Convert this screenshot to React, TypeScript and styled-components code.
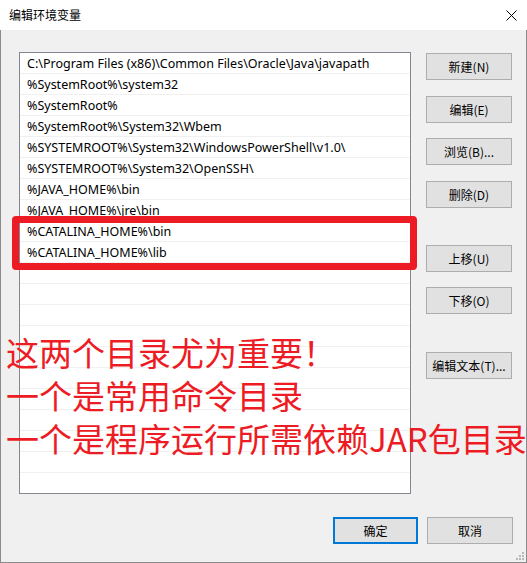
import React from "react";
import styled, { createGlobalStyle } from "styled-components";

const GlobalStyle = createGlobalStyle`
  html, body { margin: 0; padding: 0; background: #ffffff; }
  * { box-sizing: border-box; }
`;

const Window = styled.div`
  position: relative;
  width: 527px;
  height: 563px;
  display: flex;
  flex-direction: column;
  background: #f0f0f0;
  font-family: "Noto Sans", "Noto Sans CJK SC", sans-serif;
  font-size: 12px;
  color: #000;
  overflow: hidden;
`;

const TitleBar = styled.div`
  height: 30px;
  flex: none;
  display: flex;
  align-items: center;
  justify-content: space-between;
  background: #ffffff;
  padding: 0 10px 0 9px;
`;

const Title = styled.span`
  font-family: "Noto Sans CJK SC", sans-serif;
  font-size: 12px;
  line-height: 1;
`;

const CloseIcon = styled.svg`
  width: 11px;
  height: 11px;
  display: block;
`;

const Body = styled.div`
  flex: 1;
  display: flex;
  flex-direction: column;
  border-left: 1px solid #8a8a8a;
  border-right: 1px solid #8a8a8a;
  border-bottom: 1px solid #8a8a8a;
`;

const Main = styled.div`
  display: flex;
  padding: 22px 0 0 18px;
`;

const ListBox = styled.div`
  width: 392px;
  height: 442px;
  border: 1px solid #828790;
  background: #ffffff;
  overflow: hidden;
  flex: none;
`;

const Row = styled.div`
  height: 21px;
  border-bottom: 1px solid #f0f0f0;
  padding: 1px 0 0 7px;
  display: flex;
  align-items: center;
  font-family: "Noto Sans", "Noto Sans CJK SC", sans-serif;
  font-size: 12.5px;
  white-space: nowrap;
`;

const SideColumn = styled.div`
  display: flex;
  flex-direction: column;
  margin-left: 15px;
  padding-top: 1px;
`;

const Button = styled.button<{ $top?: number; $default?: boolean; $width?: number }>`
  width: ${(p) => p.$width ?? 86}px;
  height: 27px;
  margin-top: ${(p) => p.$top ?? 0}px;
  background: #e1e1e1;
  border: ${(p) => (p.$default ? "2px solid #0078d7" : "1px solid #adadad")};
  border-radius: 0;
  padding: 0;
  font-family: "Noto Sans CJK SC", sans-serif;
  font-size: 12px;
  color: #000;
  display: flex;
  align-items: center;
  justify-content: center;
  line-height: 1;
`;

const Footer = styled.div`
  display: flex;
  justify-content: flex-end;
  gap: 9px;
  padding: 23px 13px 0 0;
`;

const Highlight = styled.div`
  position: absolute;
  left: 12px;
  top: 216px;
  width: 405px;
  height: 54px;
  border: 7px solid #ed1c24;
  border-radius: 4px;
  pointer-events: none;
`;

const Note = styled.div`
  position: absolute;
  left: 6px;
  top: 331px;
  color: #ed1c24;
  font-family: "Noto Sans CJK SC", sans-serif;
  font-size: 33px;
  white-space: nowrap;
  pointer-events: none;
`;

const NoteLine = styled.div`
  height: 43px;
  line-height: 43px;
`;

const Grip = styled.svg`
  position: absolute;
  right: 3px;
  bottom: 3px;
  width: 8px;
  height: 8px;
`;

const paths = [
  "C:\\Program Files (x86)\\Common Files\\Oracle\\Java\\javapath",
  "%SystemRoot%\\system32",
  "%SystemRoot%",
  "%SystemRoot%\\System32\\Wbem",
  "%SYSTEMROOT%\\System32\\WindowsPowerShell\\v1.0\\",
  "%SYSTEMROOT%\\System32\\OpenSSH\\",
  "%JAVA_HOME%\\bin",
  "%JAVA_HOME%\\jre\\bin",
  "%CATALINA_HOME%\\bin",
  "%CATALINA_HOME%\\lib",
];

const rows = [...paths, ...Array(12).fill("")];

export default function App() {
  return (
    <>
      <GlobalStyle />
      <Window>
        <TitleBar>
          <Title>编辑环境变量</Title>
          <CloseIcon viewBox="0 0 11 11">
            <path d="M0.5 0.5 L10.5 10.5 M10.5 0.5 L0.5 10.5" stroke="#000" strokeWidth="1" fill="none" />
          </CloseIcon>
        </TitleBar>
        <Body>
          <Main>
            <ListBox>
              {rows.map((r, i) => (
                <Row key={i}>{r}</Row>
              ))}
            </ListBox>
            <SideColumn>
              <Button>新建(N)</Button>
              <Button $top={16}>编辑(E)</Button>
              <Button $top={15}>浏览(B)...</Button>
              <Button $top={16}>删除(D)</Button>
              <Button $top={37}>上移(U)</Button>
              <Button $top={15}>下移(O)</Button>
              <Button $top={38}>编辑文本(T)...</Button>
            </SideColumn>
          </Main>
          <Footer>
            <Button $default $width={85}>确定</Button>
            <Button>取消</Button>
          </Footer>
        </Body>
        <Highlight />
        <Note>
          <NoteLine>这两个目录尤为重要！</NoteLine>
          <NoteLine>一个是常用命令目录</NoteLine>
          <NoteLine>一个是程序运行所需依赖JAR包目录</NoteLine>
        </Note>
        <Grip viewBox="0 0 8 8">
          <rect x="6" y="0" width="2" height="2" fill="#b8b8b8" />
          <rect x="3" y="3" width="2" height="2" fill="#b8b8b8" />
          <rect x="6" y="3" width="2" height="2" fill="#b8b8b8" />
          <rect x="0" y="6" width="2" height="2" fill="#b8b8b8" />
          <rect x="3" y="6" width="2" height="2" fill="#b8b8b8" />
          <rect x="6" y="6" width="2" height="2" fill="#b8b8b8" />
        </Grip>
      </Window>
    </>
  );
}
